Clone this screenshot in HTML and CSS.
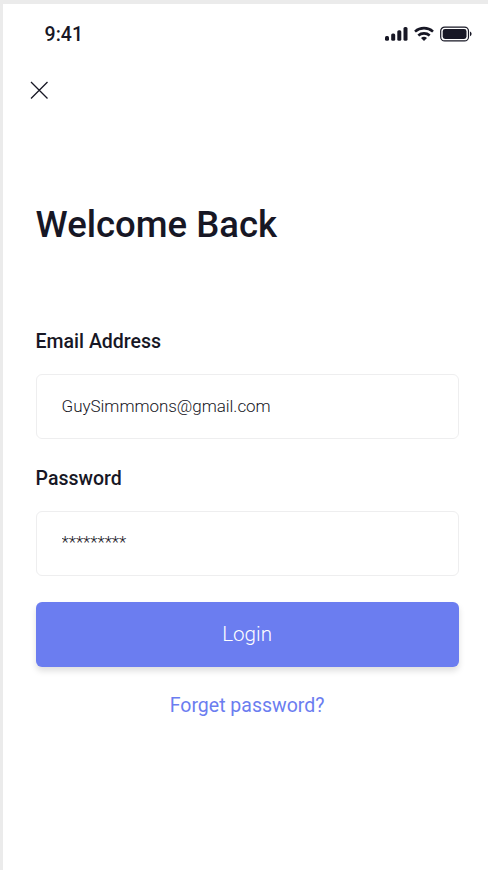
FILE: index.html
```html
<!DOCTYPE html>
<html lang="en">
<head>
<meta charset="utf-8">
<title>Login</title>
<link rel="stylesheet" href="styles.css">
</head>
<body>
<main class="screen">
  <header class="status">
    <span class="time">9:41</span>
    <svg class="indicators" width="88" height="18" viewBox="0 0 88 18" fill="#171725">
      <rect x="0" y="11" width="4" height="4.800" rx="1.500"/>
      <rect x="6.200" y="8.500" width="4" height="7.300" rx="1.500"/>
      <rect x="12.300" y="5.300" width="4" height="10.500" rx="1.500"/>
      <rect x="18.500" y="2" width="4" height="13.800" rx="1.500"/>
      <g fill="none" stroke="#171725" stroke-width="2.600">
        <path d="M30 6.600a13.500 13.500 0 0 1 18 0"/>
        <path d="M33.300 10.500a8.700 8.700 0 0 1 11.400 0"/>
      </g>
      <path d="M36 12.900a4.700 4.700 0 0 1 6 0l-3 3z"/>
      <rect x="55.700" y="2.100" width="27.800" height="13.800" rx="4" fill="none" stroke="#171725" stroke-width="1.200"/>
      <rect x="57.700" y="4.100" width="23.800" height="9.800" rx="2.300"/>
      <path d="M85 6.600c2.100.8 2.100 3.900 0 4.700z"/>
    </svg>
  </header>
  <button class="close" aria-label="Close">
    <svg width="18" height="18" viewBox="0 0 18 18"><path d="M1 1l16.500 16.500M17.500 1L1 17.500" fill="none" stroke="#171725" stroke-width="1.300"/></svg>
  </button>
  <h1>Welcome Back</h1>
  <form class="form">
    <label for="email">Email Address</label>
    <input id="email" type="text" value="GuySimmmons@gmail.com">
    <label for="password">Password</label>
    <input id="password" type="text" value="*********">
    <button class="login" type="button">Login</button>
    <a class="forgot">Forget password?</a>
  </form>
</main>
</body>
</html>
```
FILE: styles.css
```css
* { box-sizing: border-box; }
body { margin: 0; background: #ebebeb; font-family: Roboto, sans-serif; color: #171725; }
.screen { margin: 4px 0 0 3px; height: 866px; background: #fff; padding: 18px 15px 0 32.600px; overflow: hidden; }
.status { display: flex; justify-content: space-between; align-items: center; height: 24px; padding-left: 9px; }
.time { padding-top: 2px; font-size: 19.500px; font-weight: 500; line-height: 24px; }
.indicators { display: block; }
.close { display: block; margin: 35px 0 0 -5.600px; padding: 0; border: 0; background: none; height: 18px; width: 18px; }
.close svg { display: block; }
h1 { margin: 102px 0 0; font-size: 36.500px; line-height: 48px; font-weight: 500; }
.form { display: flex; flex-direction: column; width: 423px; margin-top: 81px; }
label { font-size: 19.500px; font-weight: 500; line-height: 24px; }
input { height: 65px; margin: 20px 0 28px; padding: 0 26px 1px 25px; border: 1px solid #eeeeef; border-radius: 6px; font: 300 17px Roboto, sans-serif; letter-spacing: -.04px; color: #171725; background: #fff; outline: 0; }
#password { margin: 19.500px 0 26px; padding-bottom: 2px; }
.login { height: 65px; border: 0; border-radius: 6px; background: #6b7df0; color: #fff; font: 300 20.600px Roboto, sans-serif; box-shadow: 0 4px 6px rgba(0,0,0,.13); padding: 0 0 1px; }
.forgot { margin-top: 26px; font-size: 19.500px; line-height: 26px; color: #6b7df0; text-align: center; }
```
